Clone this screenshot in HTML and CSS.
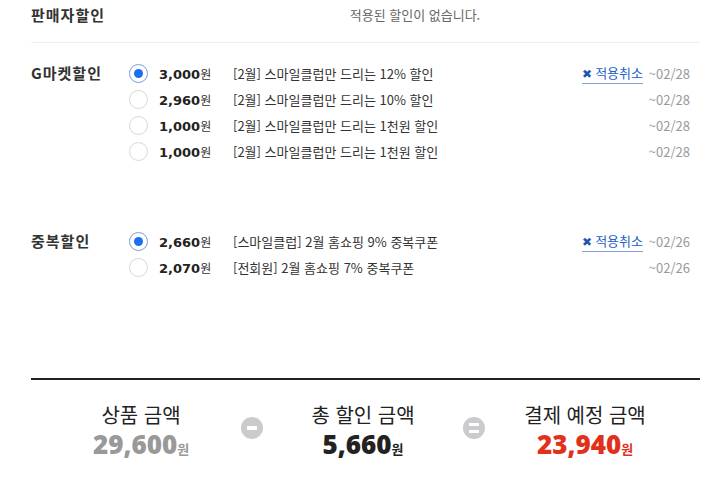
FILE: index.html
```html
<!DOCTYPE html>
<html lang="ko">
<head>
    <meta charset="UTF-8">
    <meta name="viewport" content="width=device-width, initial-scale=1.0">
    <title>할인 적용</title>
    <link rel="stylesheet" href="styles.css">
</head>
<body>
    <div class="discount-wrap">

        <!-- 판매자 할인 -->
        <div class="sale-section seller">
            <div class="sale-title">판매자할인</div>
            <div class="sale-empty">적용된 할인이 없습니다.</div>
        </div>

        <!-- G마켓 할인 -->
        <div class="sale-section gmarket">
            <div class="sale-title">G마켓할인</div>
            <ul class="coupon-list">
                <li class="coupon-item selected">
                    <span class="radio"></span>
                    <span class="price"><strong>3,000</strong>원</span>
                    <span class="desc">[2월] 스마일클럽만 드리는 12% 할인</span>
                    <a class="cancel" href="#"><span class="x">&#x2716;</span>적용취소</a>
                    <span class="date">~02/28</span>
                </li>
                <li class="coupon-item">
                    <span class="radio"></span>
                    <span class="price"><strong>2,960</strong>원</span>
                    <span class="desc">[2월] 스마일클럽만 드리는 10% 할인</span>
                    <span></span>
                    <span class="date">~02/28</span>
                </li>
                <li class="coupon-item">
                    <span class="radio"></span>
                    <span class="price"><strong>1,000</strong>원</span>
                    <span class="desc">[2월] 스마일클럽만 드리는 1천원 할인</span>
                    <span></span>
                    <span class="date">~02/28</span>
                </li>
                <li class="coupon-item">
                    <span class="radio"></span>
                    <span class="price"><strong>1,000</strong>원</span>
                    <span class="desc">[2월] 스마일클럽만 드리는 1천원 할인</span>
                    <span></span>
                    <span class="date">~02/28</span>
                </li>
            </ul>
        </div>

        <!-- 중복 할인 -->
        <div class="sale-section duplicate">
            <div class="sale-title">중복할인</div>
            <ul class="coupon-list">
                <li class="coupon-item selected">
                    <span class="radio"></span>
                    <span class="price"><strong>2,660</strong>원</span>
                    <span class="desc">[스마일클럽] 2월 홈쇼핑 9% 중복쿠폰</span>
                    <a class="cancel" href="#"><span class="x">&#x2716;</span>적용취소</a>
                    <span class="date">~02/26</span>
                </li>
                <li class="coupon-item">
                    <span class="radio"></span>
                    <span class="price"><strong>2,070</strong>원</span>
                    <span class="desc">[전회원] 2월 홈쇼핑 7% 중복쿠폰</span>
                    <span></span>
                    <span class="date">~02/26</span>
                </li>
            </ul>
        </div>

        <!-- 합계 -->
        <div class="summary">
            <div class="sum-box">
                <div class="sum-label">상품 금액</div>
                <div class="sum-value gray"><strong>29,600</strong>원</div>
            </div>
            <div class="sum-sign">
                <span class="sign minus"></span>
            </div>
            <div class="sum-box">
                <div class="sum-label">총 할인 금액</div>
                <div class="sum-value"><strong>5,660</strong>원</div>
            </div>
            <div class="sum-sign">
                <span class="sign equal"></span>
            </div>
            <div class="sum-box">
                <div class="sum-label">결제 예정 금액</div>
                <div class="sum-value red"><strong>23,940</strong>원</div>
            </div>
        </div>
    </div>
</body>
</html>
```

FILE: styles.css
```css
body {
    margin: 0;
    padding: 0;
    font-family: "Noto Sans CJK KR", "Noto Sans", sans-serif;
    color: #333;
    background: #fff;
}

ul {
    margin: 0;
    padding: 0;
    list-style: none;
}

.discount-wrap {
    padding: 2px 8px 0 31px;
}

/* sections */
.sale-section {
    display: flex;
    align-items: flex-start;
}

.sale-title {
    width: 99px;
    flex-shrink: 0;
    font-size: 15px;
    font-weight: bold;
    line-height: 26px;
    letter-spacing: 1px;
    color: #333;
}

.sale-section.seller {
    padding-bottom: 14px;
    border-bottom: 1px solid #eee;
}

.sale-empty {
    flex: 1;
    text-align: center;
    font-size: 13px;
    line-height: 26px;
    color: #666;
}

.sale-section.gmarket {
    padding: 17px 10px 64px 0;
}

.sale-section.duplicate {
    padding: 0 10px 98px 0;
}

.coupon-list {
    flex: 1;
}

.coupon-item {
    display: grid;
    grid-template-columns: 29px 74px 1fr auto 47px;
    align-items: center;
    height: 26px;
    font-size: 13px;
}

/* radio button */
.radio {
    width: 19px;
    height: 19px;
    border: 1px solid #d8d8d8;
    border-radius: 50%;
    box-sizing: border-box;
    position: relative;
    margin-left: -1px;
}

.coupon-item.selected .radio {
    border-color: #7b9be0;
}

.coupon-item.selected .radio::after {
    content: "";
    position: absolute;
    left: 4px;
    top: 4px;
    width: 9px;
    height: 9px;
    border-radius: 50%;
    background: #1a6ff0;
}

.price {
    color: #333;
    font-size: 12px;
}

.price strong {
    font-family: "DejaVu Sans", sans-serif;
    font-size: 13px;
    font-weight: bold;
    color: #222;
}

.desc {
    color: #333;
}

.cancel {
    color: #2161c9;
    text-decoration: none;
    border-bottom: 1px solid #7ea0df;
    line-height: 18px;
    padding-bottom: 1px;
    margin-top: 2px;
}

.cancel .x {
    font-size: 12px;
    margin-right: 3px;
    color: #1d55b8;
}

.date {
    text-align: right;
    color: #999;
}

/* summary */
.summary {
    display: flex;
    border-top: 2px solid #222;
    padding: 23px 0 18px 15px;
}

.sum-box {
    width: 190px;
    text-align: center;
}

.sum-label {
    font-family: "Liberation Sans", "Noto Sans CJK KR", sans-serif;
    font-size: 20px;
    line-height: 26px;
    color: #222;
}

.sum-value {
    line-height: 30px;
    font-size: 13px;
    font-weight: bold;
    color: #222;
}

.sum-value strong {
    font-family: "Noto Sans", sans-serif;
    font-size: 26px;
}

.sum-value.gray {
    color: #999;
}

.sum-value.red {
    color: #e2311b;
}

.sum-sign {
    width: 32px;
    display: flex;
    justify-content: center;
    padding-top: 14px;
}

.sign {
    width: 22px;
    height: 22px;
    border-radius: 50%;
    background: #cbcbcd;
    position: relative;
}

.sign.minus::after {
    content: "";
    position: absolute;
    left: 6px;
    top: 9px;
    width: 10px;
    height: 4px;
    background: #fff;
}

.sign.equal::before,
.sign.equal::after {
    content: "";
    position: absolute;
    left: 6px;
    width: 10px;
    height: 3px;
    background: #fff;
}

.sign.equal::before {
    top: 6px;
}

.sign.equal::after {
    top: 13px;
}
```
